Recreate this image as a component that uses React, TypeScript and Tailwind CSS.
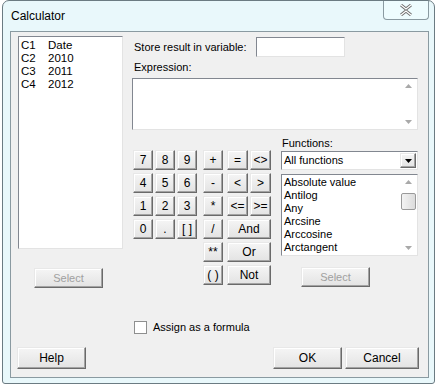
import React from "react";

const font = "font-['Liberation_Sans',Arial,sans-serif]";

const btnBase =
  "flex items-center justify-center border border-t-[#e8e8e8] border-l-[#e8e8e8] border-r-[#6a6a6a] border-b-[#6a6a6a] bg-gradient-to-b from-[#f5f5f5] to-[#e3e3e3] shadow-[inset_-1px_-1px_0_#a3a3a3,inset_1px_1px_0_#ffffff] text-[11px] leading-none";

const Btn: React.FC<{ label: string; className?: string; disabled?: boolean }> = ({ label, className = "", disabled }) => (
  <div className={`${btnBase} ${disabled ? "text-[#a0a0a0]" : "text-black"} ${className}`}>{label}</div>
);

const UpArrow = () => (
  <svg width="7" height="4" viewBox="0 0 7 4"><path d="M0 4 L3.5 0 L7 4 Z" fill="#a9a9a9" /></svg>
);
const DownArrow = ({ color = "#a9a9a9" }: { color?: string }) => (
  <svg width="7" height="4" viewBox="0 0 7 4"><path d="M0 0 L7 0 L3.5 4 Z" fill={color} /></svg>
);

const columns = [
  ["C1", "Date"],
  ["C2", "2010"],
  ["C3", "2011"],
  ["C4", "2012"],
];

const functions = ["Absolute value", "Antilog", "Any", "Arcsine", "Arccosine", "Arctangent"];

const inset = "border border-t-[#828790] border-l-[#828790] border-r-[#e3e3e3] border-b-[#e3e3e3] bg-white";

export default function App() {
  return (
    <div className={`w-[437px] h-[386px] bg-white ${font} text-black overflow-hidden`}>
      <div className="ml-[2px] w-[433px] h-[384px] rounded-t-[7px] rounded-b-[3px] border border-[#6b7b82] bg-[#e9f8fb] flex flex-col">
        {/* Title bar */}
        <div className="h-[30px] flex items-start shrink-0">
          <span className="ml-[8px] mt-[8px] text-[12px] leading-[14px]">Calculator</span>
          <div className="ml-auto mr-[5px] mt-0 w-[46px] h-[19px] border border-t-0 border-[#8a9aa1] rounded-b-[4px] bg-[#eefcfe] flex items-center justify-center">
            <svg width="14" height="12" viewBox="0 0 14 12">
              <path d="M2 1 L7 5 L12 1 M2 11 L7 7 L12 11" fill="none" stroke="#6d6d6d" strokeWidth="3" strokeLinejoin="round" />
              <path d="M2 1 L7 5 L12 1 M2 11 L7 7 L12 11" fill="none" stroke="#ffffff" strokeWidth="1.2" />
            </svg>
          </div>
        </div>

        {/* Client area */}
        <div className="ml-[7px] mr-[5px] h-[347px] border border-[#8a9aa1] bg-[#f0f0f0] flex flex-col text-[11px]">
          <div className="flex">
            {/* Left column */}
            <div className="ml-[7px] mt-[4px] w-[105px] flex flex-col">
              <div className={`${inset} h-[213px] pt-[2px] pl-[2px]`}>
                {columns.map(([c, n]) => (
                  <div key={c} className="flex h-[13px] leading-[13px] text-[11.5px]">
                    <span className="w-[27px]">{c}</span>
                    <span>{n}</span>
                  </div>
                ))}
              </div>
              <Btn label="Select" disabled className="mt-[19px] ml-[16px] w-[69px] h-[20px]" />
            </div>

            {/* Right column */}
            <div className="ml-[9px] w-[286px] flex flex-col">
              <div className="flex items-center mt-[5px] h-[20px]">
                <span className="ml-[2px] w-[122px]">Store result in variable:</span>
                <div className={`${inset} w-[89px] h-[20px]`} />
              </div>
              <div className="ml-[2px] mt-[4px] h-[13px] leading-[13px]">Expression:</div>
              <div className={`${inset} mt-[4px] h-[52px] flex justify-end`}>
                <div className="w-[17px] flex flex-col items-center justify-between py-[5px]">
                  <UpArrow />
                  <DownArrow />
                </div>
              </div>

              <div className="flex mt-[7px]">
                {/* Keypad */}
                <div className="mt-[13px] ml-[1px] flex">
                  <div className="grid grid-cols-[20px_20px_20px] auto-rows-[20px] gap-x-[2px] gap-y-[3px]">
                    {["7", "8", "9", "4", "5", "6", "1", "2", "3", "0", ".", "[ ]"].map((k) => (
                      <Btn key={k} label={k} className="text-[12px]" />
                    ))}
                  </div>
                  <div className="ml-[6px] grid grid-cols-[20px] auto-rows-[20px] gap-y-[3px]">
                    {["+", "-", "*", "/", "**", "( )"].map((k) => (
                      <Btn key={k} label={k} className="text-[12px]" />
                    ))}
                  </div>
                  <div className="ml-[4px] grid grid-cols-[21px_21px] auto-rows-[20px] gap-x-[2px] gap-y-[3px]">
                    {["=", "<>", "<", ">", "<=", ">="].map((k) => (
                      <Btn key={k} label={k} className="text-[12px]" />
                    ))}
                    <Btn label="And" className="col-span-2 text-[12px]" />
                    <Btn label="Or" className="col-span-2 text-[12px]" />
                    <Btn label="Not" className="col-span-2 text-[12px]" />
                  </div>
                </div>

                {/* Functions */}
                <div className="ml-[10px] w-[138px] flex flex-col">
                  <div className="ml-[1px] h-[13px] leading-[13px]">Functions:</div>
                  <div className={`${inset} mt-[1px] h-[19px] flex items-center pl-[2px]`}>
                    <span>All functions</span>
                    <div className={`${btnBase} ml-auto mr-[1px] w-[16px] h-[15px]`}>
                      <DownArrow color="#000" />
                    </div>
                  </div>
                  <div className={`${inset} mt-[4px] h-[82px] flex`}>
                    <div className="flex-1 pl-[2px] pt-[1px]">
                      {functions.map((f) => (
                        <div key={f} className="h-[13px] leading-[13px]">{f}</div>
                      ))}
                    </div>
                    <div className="w-[17px] flex flex-col items-center py-[5px]">
                      <UpArrow />
                      <div className="mt-[9px] w-[15px] h-[17px] border border-[#9a9a9a] rounded-[2px] bg-gradient-to-r from-[#f3f3f3] to-[#dcdcdc]" />
                      <div className="mt-auto">
                        <DownArrow />
                      </div>
                    </div>
                  </div>
                  <Btn label="Select" disabled className="mt-[11px] ml-[20px] w-[69px] h-[20px]" />
                </div>
              </div>
            </div>
          </div>

          {/* Assign as formula */}
          <div className="mt-[32px] ml-[123px] flex items-center h-[14px]">
            <div className="w-[13px] h-[13px] border border-[#8e8f8f] bg-white" />
            <span className="ml-[6px]">Assign as a formula</span>
          </div>

          {/* Bottom buttons */}
          <div className="mt-[13px] flex">
            <Btn label="Help" className="ml-[6px] w-[69px] h-[22px] text-[12px]" />
            <Btn label="OK" className="ml-[187px] w-[69px] h-[22px] text-[12px]" />
            <Btn label="Cancel" className="ml-[3px] w-[74px] h-[22px] text-[12px]" />
          </div>
        </div>
      </div>
    </div>
  );
}
